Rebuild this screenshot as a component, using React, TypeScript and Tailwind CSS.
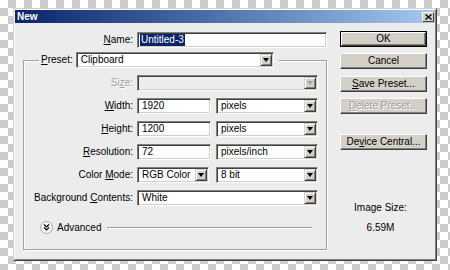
import React from "react";
import clsx from "clsx";

const sunken =
  "border border-t-[#808080] border-l-[#808080] border-b-white border-r-white p-[1px] shadow-[inset_1px_1px_0_#404040,inset_-1px_-1px_0_#d4d0c8]";

function Arrow({ disabled }: { disabled?: boolean }) {
  return (
    <div className="flex w-[12px] items-center justify-center self-stretch border border-t-[#d4d0c8] border-l-[#d4d0c8] border-b-[#404040] border-r-[#404040] bg-[#d4d0c8] shadow-[inset_1px_1px_0_#fff,inset_-1px_-1px_0_#808080]">
      <div
        className={clsx(
          "h-0 w-0 border-x-[3px] border-t-[4px] border-x-transparent",
          disabled ? "border-t-[#a0a0a0]" : "border-t-black"
        )}
      />
    </div>
  );
}

function Select({ value, className, disabled }: { value?: string; className: string; disabled?: boolean }) {
  return (
    <div className={clsx("flex h-[16px]", sunken, disabled ? "bg-[#ececec]" : "bg-white", className)}>
      <div className="flex-1 truncate pl-[3px] leading-[12px]">{value}</div>
      <Arrow disabled={disabled} />
    </div>
  );
}

function Input({ value, className }: { value: string; className: string }) {
  return (
    <div className={clsx("flex h-[16px] bg-white", sunken, className)}>
      <div className="pl-[3px] leading-[12px]">{value}</div>
    </div>
  );
}

function Row({ label, disabled, children }: { label: React.ReactNode; disabled?: boolean; children: React.ReactNode }) {
  return (
    <div className="flex h-[16px] items-center">
      <div
        className={clsx(
          "w-[109px] text-right",
          disabled && "text-[#a0a0a0] [text-shadow:1px_1px_0_#fff]"
        )}
      >
        {label}
      </div>
      <div className="ml-[4px] flex">{children}</div>
    </div>
  );
}

function Btn({
  children,
  isDefault,
  disabled,
  className,
}: {
  children: React.ReactNode;
  isDefault?: boolean;
  disabled?: boolean;
  className?: string;
}) {
  const face = (
    <div
      className={clsx(
        "flex h-full w-full items-center justify-center border border-t-white border-l-white border-b-[#404040] border-r-[#404040] bg-[#d4d0c8] shadow-[inset_-1px_-1px_0_#808080]",
        disabled && "text-[#a0a0a0] [text-shadow:1px_1px_0_#fff]"
      )}
    >
      <span className="leading-[12px]">{children}</span>
    </div>
  );
  return (
    <div className={clsx("h-[16px] w-[87px]", isDefault && "border border-black", className)}>{face}</div>
  );
}

export default function App() {
  return (
    <div className="h-[270px] w-[450px] bg-[image:conic-gradient(#cccccc_90deg,#ffffff_90deg_180deg,#cccccc_180deg_270deg,#ffffff_270deg)] bg-[length:16px_16px] pl-[13px] pt-[8px] font-['Liberation_Sans',Arial,sans-serif] text-[10px] leading-[12px] text-black">
      <div className="flex h-[253px] w-[424px] flex-col border border-t-[#d4d0c8] border-l-[#d4d0c8] border-b-[#404040] border-r-[#404040] bg-[#ececec] p-[1px] shadow-[inset_1px_1px_0_#fff,inset_-1px_-1px_0_#808080]">
        {/* title bar */}
        <div className="flex h-[13px] items-center bg-gradient-to-r from-[#0a246a] to-[#a6caf0] pl-[2px]">
          <span className="text-[10px] font-bold text-white">New</span>
          <div className="ml-auto mr-[1px] flex h-[10px] w-[12px] items-center justify-center border border-t-white border-l-white border-b-[#404040] border-r-[#404040] bg-[#d4d0c8]">
            <svg width="7" height="6" viewBox="0 0 7 6">
              <path d="M0.5 0.5 L6.5 5.5 M6.5 0.5 L0.5 5.5" stroke="#000" strokeWidth="1.4" />
            </svg>
          </div>
        </div>

        <div className="flex">
          {/* left column */}
          <div className="w-[312px] pt-[9px]">
            <div className="flex h-[16px] items-center">
              <div className="w-[118px] text-right">
                <u>N</u>ame:
              </div>
              <div className={clsx("ml-[4px] flex h-[16px] w-[190px] bg-white", sunken)}>
                <span className="ml-[1px] bg-[#0a246a] px-[1px] leading-[12px] text-white">Untitled-3</span>
              </div>
            </div>

            <fieldset className="ml-[8px] mt-[4px] w-[304px] border border-[#a0a0a0] px-0 pb-[15px] shadow-[1px_1px_0_#fff,inset_1px_1px_0_#fff]">
              <legend className="ml-[15px] bg-[#ececec] pl-[2px] pr-[5px]">
                <div className="flex items-center">
                  <span>
                    <u>P</u>reset:
                  </span>
                  <Select value="Clipboard" className="ml-[3px] w-[198px]" />
                </div>
              </legend>

              <div className="mt-[7px] flex flex-col gap-[7px]">
                <Row
                  label={
                    <>
                      Si<u>z</u>e:
                    </>
                  }
                  disabled
                >
                  <Select className="w-[181px]" disabled />
                </Row>
                <Row
                  label={
                    <>
                      <u>W</u>idth:
                    </>
                  }
                >
                  <Input value="1920" className="w-[74px]" />
                  <Select value="pixels" className="ml-[5px] w-[102px]" />
                </Row>
                <Row
                  label={
                    <>
                      <u>H</u>eight:
                    </>
                  }
                >
                  <Input value="1200" className="w-[74px]" />
                  <Select value="pixels" className="ml-[5px] w-[102px]" />
                </Row>
                <Row
                  label={
                    <>
                      <u>R</u>esolution:
                    </>
                  }
                >
                  <Input value="72" className="w-[74px]" />
                  <Select value="pixels/inch" className="ml-[5px] w-[102px]" />
                </Row>
                <Row
                  label={
                    <>
                      Color <u>M</u>ode:
                    </>
                  }
                >
                  <Select value="RGB Color" className="w-[72px]" />
                  <Select value="8 bit" className="ml-[7px] w-[102px]" />
                </Row>
                <Row
                  label={
                    <>
                      Background <u>C</u>ontents:
                    </>
                  }
                >
                  <Select value="White" className="w-[181px]" />
                </Row>
              </div>

              <div className="mt-[15px] flex h-[13px] items-center">
                <svg className="ml-[16px]" width="13" height="13" viewBox="0 0 13 13">
                  <circle cx="6.5" cy="6.5" r="6" fill="#f6f6f6" stroke="#a8a8a8" />
                  <path d="M4 3.5 L6.5 6 L9 3.5 M4 6.5 L6.5 9 L9 6.5" fill="none" stroke="#000" strokeWidth="1.2" />
                </svg>
                <span className="ml-[4px]">Advanced</span>
                <div className="ml-[6px] mr-[14px] h-[2px] flex-1 border-t border-t-[#a0a0a0] border-b border-b-white" />
              </div>
            </fieldset>
          </div>

          {/* right column */}
          <div className="ml-[13px] flex w-[87px] flex-col pt-[8px]">
            <Btn isDefault>OK</Btn>
            <Btn className="mt-[6px]">Cancel</Btn>
            <Btn className="mt-[7px]">
              <u>S</u>ave Preset...
            </Btn>
            <Btn className="mt-[6px]" disabled>
              <u>D</u>elete Preset...
            </Btn>
            <Btn className="mt-[20px]">
              De<u>v</u>ice Central...
            </Btn>
            <div className="mt-[52px] pr-[6px] text-center">Image Size:</div>
            <div className="mt-[8px] pr-[6px] text-center">6.59M</div>
          </div>
        </div>
      </div>
    </div>
  );
}
